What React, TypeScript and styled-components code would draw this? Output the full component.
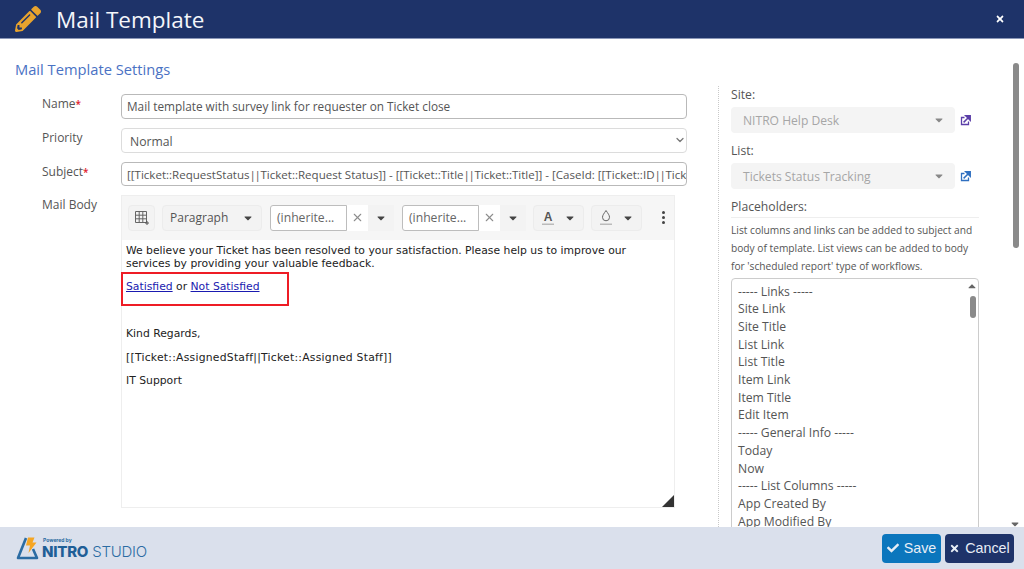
import React from "react";
import styled, { createGlobalStyle } from "styled-components";
import { FaPencilAlt, FaCheck, FaTimes, FaCaretDown, FaCaretUp } from "react-icons/fa";
import { ChevronDown, X } from "lucide-react";

const Global = createGlobalStyle`
  html, body { margin: 0; padding: 0; height: 100%; overflow: hidden; background: #fff; }
  #root { height: 100%; }
  * { box-sizing: border-box; }
`;
const sans = `"Open Sans", "Noto Sans", "Liberation Sans", sans-serif`;

const Page = styled.div`
  width: 1024px; height: 569px; display: flex; flex-direction: column;
  font-family: ${sans}; color: #555; overflow: hidden; background: #fff;
`;
const Header = styled.header`
  height: 39px; flex: none; background: #1e3369; display: flex; align-items: center;
  padding: 0 19px 0 15px; color: #fff; border-bottom: 1px solid #8a97b8;
`;
const Title = styled.h1`
  margin: 0 0 0 15px; font-size: 22.5px; font-weight: 400; line-height: 39px; flex: 1; color: #f4f6fa;
`;
const Body = styled.main`
  flex: 1; min-height: 0; display: flex; overflow: hidden; position: relative;
`;
const Left = styled.section`
  width: 718px; flex: none; padding: 20px 0 0 15px;
`;
const SectionTitle = styled.h2`
  margin: 0 0 15px; font-size: 14.7px; line-height: 20px; font-weight: 400; color: #4a72c4;
`;
const FormRow = styled.div<{ $h: number }>`
  display: flex; height: ${p => p.$h}px; margin-bottom: 9px;
`;
const Label = styled.label`
  width: 79px; flex: none; margin-left: 27px; padding-top: 1px; font-size: 12px; line-height: 18px; color: #555;
  b { color: #e0202a; font-weight: 600; font-size: 10px; }
`;
const TextInput = styled.div<{ $h: number }>`
  width: 566px; height: ${p => p.$h}px; border: 1px solid #b9b9b9; border-radius: 4px; padding: 0 5px;
  font-size: 11.8px; line-height: 23px; color: #555; white-space: nowrap; overflow: hidden;
`;
const SubjectInput = styled(TextInput)`
  font-size: 11.55px;
`;
const Pipes = styled.span`
  letter-spacing: -1.4px; margin-right: 1px;
`;
const SelectWrap = styled.div`
  width: 566px; height: 25px; position: relative; color: #777;
  svg { position: absolute; right: 1px; top: 6px; pointer-events: none; }
`;
const Select = styled.select`
  width: 100%; height: 25px; appearance: none; border: 1px solid #dcdcdc; border-radius: 4px; padding: 2px 8px 0;
  font-family: ${sans}; font-size: 12.2px; color: #555; background: #fff;
`;
const Editor = styled.div`
  width: 554px; height: 313px; border: 1px solid #eee; display: flex; flex-direction: column; position: relative;
`;
const Toolbar = styled.div`
  height: 44px; flex: none; background: #f6f6f6; display: flex; align-items: center; padding: 0 6px 1px; gap: 7px;
`;
const ToolBtn = styled.div<{ $w: number }>`
  width: ${p => p.$w}px; height: 26px; flex: none; border: 1px solid #ececec; border-radius: 4px; background: #f3f3f3;
  display: flex; align-items: center; justify-content: space-between; padding: 0 7px; font-size: 12px; color: #555;
  svg { flex: none; }
`;
const TableBtn = styled(ToolBtn)`
  justify-content: center; padding: 0;
`;
const FontCombo = styled.div`
  display: flex; height: 26px; width: 124px; flex: none; margin-left: 1px;
`;
const FontInput = styled.div`
  width: 77px; border: 1px solid #bdbdbd; border-radius: 3px 0 0 3px; background: #fff; padding: 0 6px;
  font-size: 12.2px; line-height: 24px; color: #666; white-space: nowrap;
`;
const FontClear = styled.div`
  width: 21px; background: #fff; display: flex; align-items: center; justify-content: center; color: #8d8d8d;
`;
const FontArrow = styled.div`
  flex: 1; background: #f3f3f3; display: flex; align-items: center; justify-content: center; color: #444;
`;
const Dots = styled.div`
  margin-left: 13px; display: flex; flex-direction: column; gap: 2px;
  i { width: 3px; height: 3px; border-radius: 50%; background: #444; display: block; }
`;
const Content = styled.div`
  flex: 1; padding: 4px 5px 0 4px; font-family: "DejaVu Sans", Verdana, sans-serif; font-size: 10.8px; line-height: 13px; color: #222;
  position: relative;
`;
const Para = styled.p<{ $mb: number; $ls?: number }>`
  margin: 0 0 ${p => p.$mb}px; white-space: nowrap; letter-spacing: ${p => p.$ls ?? 0}px;
`;
const MailLink = styled.a`
  color: #1a1ab0; text-decoration: underline;
`;
const RedBox = styled.div`
  position: absolute; left: -1px; top: 32px; width: 168px; height: 34px; border: 2px solid #ee1c25;
`;
const Resize = styled.div`
  position: absolute; right: 0; bottom: 0; width: 0; height: 0;
  border-style: solid; border-width: 0 0 12px 12px; border-color: transparent transparent #333 transparent;
`;
const Right = styled.aside`
  width: 306px; flex: none; margin-top: 47px; border-left: 1px dotted #c9c9c9; padding: 0 0 0 12px; overflow: hidden;
`;
const SideLabel = styled.div`
  font-size: 12.2px; line-height: 17px; color: #555;
`;
const SiteRow = styled.div`
  display: flex; align-items: center; gap: 5px; margin: 4px 0 9px;
`;
const Disabled = styled.div`
  width: 224px; height: 26px; background: #f4f4f4; border-radius: 4px; display: flex; align-items: center;
  justify-content: space-between; padding: 0 10px 0 12px; font-size: 12.1px; color: #a6a6a6;
`;
const PlaceHead = styled.div`
  font-size: 12.2px; line-height: 18px; color: #555; border-bottom: 1px solid #eee; width: 248px; padding-bottom: 1px; margin-top: 2px;
`;
const Help = styled.p`
  width: 248px; margin: 3px 0 3px; font-size: 10.2px; line-height: 18px; color: #555; white-space: nowrap;
`;
const ListBox = styled.div`
  width: 248px; height: 260px; border: 1px solid #ccc; border-radius: 4px 4px 0 0; padding: 3.5px 0 0 6px; position: relative; overflow: hidden;
`;
const ListItem = styled.div`
  font-size: 12.2px; line-height: 17.7px; color: #555; white-space: nowrap;
`;
const ListScrollUp = styled.div`
  position: absolute; right: 0; top: 1px; color: #666; line-height: 0;
`;
const ListThumb = styled.div`
  position: absolute; right: 2px; top: 17px; width: 6px; height: 22px; border-radius: 3px; background: #8a8a8a;
`;
const PageThumb = styled.div`
  position: absolute; right: 5px; top: 24px; width: 6px; height: 185px; border-radius: 3px; background: #8a8a8a;
`;
const PageDown = styled.div`
  position: absolute; right: 3px; bottom: -3px; color: #666; line-height: 0;
`;
const Footer = styled.footer`
  height: 42px; flex: none; background: #dae0ec; display: flex; align-items: center; justify-content: space-between;
  padding: 0 10px 0 16px; position: relative; z-index: 1;
`;
const Brand = styled.div`
  display: flex; align-items: center; gap: 2px;
`;
const BrandText = styled.div`
  display: flex; flex-direction: column; color: #2b6ca3; margin-top: 1px;
`;
const Powered = styled.span`
  font-family: "Inter", sans-serif; font-size: 5px; line-height: 5px; font-weight: 700; margin-left: 1px;
`;
const Nitro = styled.span`
  font-family: "Inter", sans-serif; font-size: 15px; line-height: 17px; letter-spacing: -0.25px; font-weight: 300; white-space: nowrap;
  b { font-weight: 800; color: #1f5f97; }
`;
const Buttons = styled.div`
  display: flex; gap: 4px;
`;
const Btn = styled.button<{ $bg: string; $w: number }>`
  width: ${p => p.$w}px; height: 29px; border: 0; border-radius: 4px; background: ${p => p.$bg}; color: #e8eef6;
  font-family: "Liberation Sans", sans-serif; font-size: 14.3px; display: flex; align-items: center; justify-content: center; gap: 5px; padding: 0;
`;

const TableIcon = () => (
  <svg width="16" height="16" viewBox="0 0 16 16" fill="none" stroke="#666" strokeWidth="1">
    <path d="M1.5 1.5h11v11h-11zM1.5 5.2h11M1.5 8.8h11M5.2 1.5v11M8.8 1.5v11" />
    <path d="M13 11v4M11 13h4" stroke="#555" />
  </svg>
);
const LinkIcon = ({ color }: { color: string }) => (
  <svg width="11" height="11" viewBox="0 0 11 11" fill="none">
    <path d="M8.5 6.500v3h-7v-7h3" stroke={color} strokeWidth="1.300" />
    <path d="M3.600 7.400 8 3M5.800 .8h4.400v4.400z" stroke={color} strokeWidth="1.500" fill={color} />
  </svg>
);
const ColorA = () => (
  <svg width="14" height="16" viewBox="0 0 14 16">
    <text x="7" y="11" textAnchor="middle" fontFamily="Liberation Sans, sans-serif" fontSize="12" fontWeight="700" fill="#555">A</text>
    <rect x="1" y="13.500" width="12" height="1.500" fill="#bbb" />
  </svg>
);
const DropIcon = () => (
  <svg width="14" height="17" viewBox="0 0 14 17" fill="none">
    <path d="M7 1.500C5 4.500 3.500 6.200 3.500 8.300a3.500 3.500 0 0 0 7 0C10.500 6.200 9 4.500 7 1.500z" stroke="#666" strokeWidth="1" />
    <rect x="1" y="14.500" width="12" height="1.500" fill="#bbb" />
  </svg>
);
const Logo = () => (
  <svg width="24" height="25" viewBox="0 0 24 25" fill="none">
    <path d="M10 2 2 22h19l-4-9" stroke="#2b6ca3" strokeWidth="2.600" strokeLinejoin="round" />
    <path d="M12 1.500h6.500l-2 5h4L12.500 17l1.500-7.500h-4z" fill="#f5a623" />
  </svg>
);

const items = ["----- Links -----","Site Link","Site Title","List Link","List Title","Item Link","Item Title","Edit Item","----- General Info -----","Today","Now","----- List Columns -----","App Created By","App Modified By"];

export default function App() {
  return (
    <Page>
      <Global />
      <Header>
        <FaPencilAlt size={26} color="#e8a32e" />
        <Title>Mail Template</Title>
        <FaTimes size={10} color="#fff" />
      </Header>
      <Body>
        <Left>
          <SectionTitle>Mail Template Settings</SectionTitle>
          <FormRow $h={25}>
            <Label>Name<b>*</b></Label>
            <TextInput $h={25}>Mail template with survey link for requester on Ticket close</TextInput>
          </FormRow>
          <FormRow $h={25}>
            <Label>Priority</Label>
            <SelectWrap>
              <Select defaultValue="Normal"><option>Normal</option></Select>
              <ChevronDown size={12} strokeWidth={2.5} />
            </SelectWrap>
          </FormRow>
          <FormRow $h={24}>
            <Label>Subject<b>*</b></Label>
            <SubjectInput $h={24}>[[Ticket::RequestStatus<Pipes>||</Pipes>Ticket::Request Status]] - [[Ticket::Title<Pipes>||</Pipes>Ticket::Title]] - [CaseId: [[Ticket::ID<Pipes>||</Pipes>Ticket::ID]]]</SubjectInput>
          </FormRow>
          <FormRow $h={313}>
            <Label>Mail Body</Label>
            <Editor>
              <Toolbar>
                <TableBtn $w={27}><TableIcon /></TableBtn>
                <ToolBtn $w={100}><span>Paragraph</span><FaCaretDown size={12} color="#444" /></ToolBtn>
                <FontCombo><FontInput>(inherite...</FontInput><FontClear><X size={13} /></FontClear><FontArrow><FaCaretDown size={12} /></FontArrow></FontCombo>
                <FontCombo><FontInput>(inherite...</FontInput><FontClear><X size={13} /></FontClear><FontArrow><FaCaretDown size={12} /></FontArrow></FontCombo>
                <ToolBtn $w={51}><ColorA /><FaCaretDown size={12} color="#444" /></ToolBtn>
                <ToolBtn $w={51}><DropIcon /><FaCaretDown size={12} color="#444" /></ToolBtn>
                <Dots><i /><i /><i /></Dots>
              </Toolbar>
              <Content>
                <Para $mb={10}>We believe your Ticket has been resolved to your satisfaction. Please help us to improve our<br />services by providing your valuable feedback.</Para>
                <Para $mb={34}><MailLink href="#">Satisfied</MailLink> or <MailLink href="#">Not Satisfied</MailLink></Para>
                <Para $mb={11}>Kind Regards,</Para>
                <Para $mb={10} $ls={0.24}>[[Ticket::AssignedStaff||Ticket::Assigned Staff]]</Para>
                <Para $mb={0}>IT Support</Para>
                <RedBox />
              </Content>
              <Resize />
            </Editor>
          </FormRow>
        </Left>
        <Right>
          <SideLabel>Site:</SideLabel>
          <SiteRow>
            <Disabled><span>NITRO Help Desk</span><FaCaretDown size={12} color="#888" /></Disabled>
            <LinkIcon color="#5b3fa8" />
          </SiteRow>
          <SideLabel>List:</SideLabel>
          <SiteRow>
            <Disabled><span>Tickets Status Tracking</span><FaCaretDown size={12} color="#888" /></Disabled>
            <LinkIcon color="#2f6fc0" />
          </SiteRow>
          <PlaceHead>Placeholders:</PlaceHead>
          <Help>List columns and links can be added to subject and<br />body of template. List views can be added to body<br />for 'scheduled report' type of workflows.</Help>
          <ListBox>
            {items.map(i => <ListItem key={i}>{i}</ListItem>)}
            <ListScrollUp><FaCaretUp size={12} /></ListScrollUp>
            <ListThumb />
          </ListBox>
        </Right>
        <PageThumb />
        <PageDown><FaCaretDown size={12} /></PageDown>
      </Body>
      <Footer>
        <Brand>
          <Logo />
          <BrandText>
            <Powered>Powered by</Powered>
            <Nitro><b>NITRO</b> STUDIO</Nitro>
          </BrandText>
        </Brand>
        <Buttons>
          <Btn $bg="#0b76bd" $w={59}><FaCheck size={12} />Save</Btn>
          <Btn $bg="#1e3369" $w={69}><FaTimes size={11} />Cancel</Btn>
        </Buttons>
      </Footer>
    </Page>
  );
}
